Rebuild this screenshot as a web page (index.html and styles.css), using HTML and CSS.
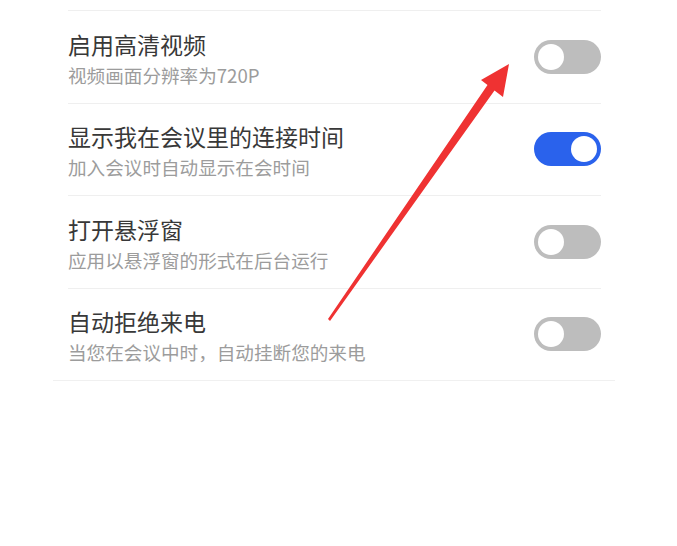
FILE: index.html
```html
<!DOCTYPE html>
<html lang="zh-CN">
<head>
<meta charset="utf-8">
<title>会议设置</title>
<link rel="stylesheet" href="styles.css">
</head>
<body>
<div class="page">
  <div class="list">
    <div class="row row-prev"></div>
    <div class="row">
      <div class="text">
        <div class="title">启用高清视频</div>
        <div class="sub">视频画面分辨率为720P</div>
      </div>
      <div class="toggle"><span class="knob"></span></div>
    </div>
    <div class="row">
      <div class="text">
        <div class="title">显示我在会议里的连接时间</div>
        <div class="sub">加入会议时自动显示在会时间</div>
      </div>
      <div class="toggle on"><span class="knob"></span></div>
    </div>
    <div class="row">
      <div class="text">
        <div class="title">打开悬浮窗</div>
        <div class="sub">应用以悬浮窗的形式在后台运行</div>
      </div>
      <div class="toggle"><span class="knob"></span></div>
    </div>
    <div class="row last">
      <div class="text">
        <div class="title">自动拒绝来电</div>
        <div class="sub">当您在会议中时，自动挂断您的来电</div>
      </div>
      <div class="toggle"><span class="knob"></span></div>
    </div>
  </div>
  <svg class="arrow" width="677" height="546" viewBox="0 0 677 546">
    <polygon points="509,64 503,97 494.5,90.5 330,321 328,319 487.5,85 481,80" fill="#ef3232"/>
  </svg>
</div>
</body>
</html>
```

FILE: styles.css
```css
html, body {
  margin: 0;
  padding: 0;
  background: #ffffff;
}
body {
  font-family: "Noto Sans CJK SC", "Noto Sans", sans-serif;
}
.page {
  position: relative;
  width: 677px;
  height: 546px;
  overflow: hidden;
}
.list {
  margin-left: 53px;
  width: 562px;
  border-bottom: 1px solid #f0f0f0;
}
.row {
  margin: 0 14px 0 15px;
  height: 91.5px;
  border-bottom: 1px solid #efefef;
  display: flex;
  align-items: center;
  justify-content: space-between;
}
.row-prev {
  height: 10px;
}
.row.last {
  border-bottom: none;
}
.text {
  display: flex;
  flex-direction: column;
  margin-top: 2px;
}
.title {
  font-size: 23px;
  line-height: 33px;
  color: #383838;
}
.sub {
  font-size: 18.6px;
  line-height: 27px;
  color: #9c9c9c;
}
.toggle {
  position: relative;
  width: 67px;
  height: 34px;
  border-radius: 17px;
  background: #bdbdbd;
  flex: none;
}
.knob {
  position: absolute;
  top: 4px;
  left: 4px;
  width: 26px;
  height: 26px;
  border-radius: 50%;
  background: #ffffff;
}
.toggle.on {
  background: #2a62ec;
}
.toggle.on .knob {
  left: 37px;
}
.arrow {
  position: absolute;
  left: 0;
  top: 0;
  pointer-events: none;
}
```
